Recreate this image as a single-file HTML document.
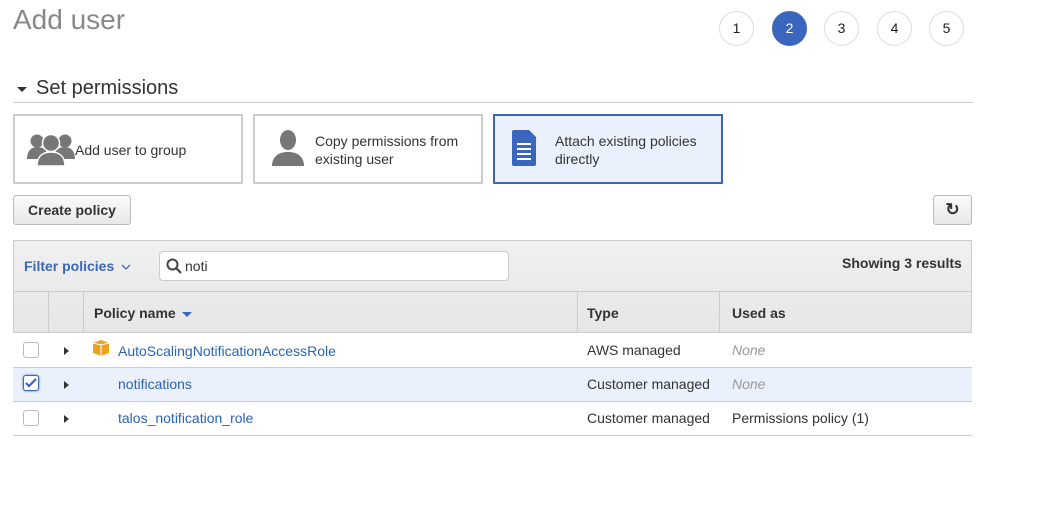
<!DOCTYPE html>
<html><head><style>
*{margin:0;padding:0;box-sizing:border-box}
body{width:1054px;height:527px;background:#fff;font-family:"Liberation Sans",Arial,sans-serif;color:#333;position:relative;overflow:hidden;font-size:14px}
.a{position:absolute}
.step{position:absolute;top:11px;width:35px;height:35px;border-radius:50%;border:1px solid #ddd;text-align:center;line-height:33px;font-size:14px;color:#222}
.card{position:absolute;top:114px;width:230px;height:70px;border:2px solid #ccc;background:#fff}
.card span{position:absolute;font-size:14px;line-height:18px;color:#333}
.hdr{background:linear-gradient(#f0f0f0,#e6e6e6)}
.cell{position:absolute;font-size:14px}
.cb{position:absolute;left:23px;width:16px;height:16px;border:1px solid #bbb;border-radius:3px;background:#fff}
.tri{position:absolute;left:64px;width:0;height:0;border-left:5px solid #333;border-top:4px solid transparent;border-bottom:4px solid transparent}
.link{color:#2a62b8}
</style></head><body>
<div class="a" style="left:13px;top:4px;font-size:28px;color:#888">Add user</div>
<div class="step" style="left:719px">1</div>
<div class="step" style="left:772px;background:#3b66bd;border-color:#3b66bd;color:#fff">2</div>
<div class="step" style="left:824px">3</div>
<div class="step" style="left:877px">4</div>
<div class="step" style="left:929px">5</div>

<div class="a" style="left:17px;top:87px;width:0;height:0;border-top:5px solid #333;border-left:5px solid transparent;border-right:5px solid transparent"></div>
<div class="a" style="left:36px;top:77px;font-size:20px;color:#333">Set permissions</div>
<div class="a" style="left:13px;top:102px;width:960px;height:1px;background:#ccc"></div>

<div class="card" style="left:13px">
<svg class="a" style="left:12px;top:16px" width="48" height="34" viewBox="0 0 48 34" fill="#777"><circle cx="10" cy="9" r="6.5"/><circle cx="38" cy="9" r="6.5"/><path d="M0 27c0-8 4-12 10-12s9 3 10 6v6z"/><path d="M48 27c0-8-4-12-10-12s-9 3-10 6v6z"/><circle cx="24" cy="11" r="8.5" stroke="#fff" stroke-width="1.5"/><path d="M10 34c0-10 6-14 14-14s14 4 14 14z" stroke="#fff" stroke-width="1.5"/></svg>
<span style="left:60px;top:25px">Add user to group</span></div>
<div class="card" style="left:253px">
<svg class="a" style="left:17px;top:14px" width="32" height="36" viewBox="0 0 32 36" fill="#777"><ellipse cx="16" cy="10" rx="8" ry="10"/><path d="M0 36c0-9 6-14 16-14s16 5 16 14z"/></svg>
<span style="left:60px;top:16px">Copy permissions from<br>existing user</span></div>
<div class="card" style="left:493px;border-color:#3b66bd;background:#eaf1fd">
<svg class="a" style="left:17px;top:14px" width="24" height="36" viewBox="0 0 24 36"><path d="M2 0h15l7 7v27a2 2 0 0 1-2 2H2a2 2 0 0 1-2-2V2a2 2 0 0 1 2-2z" fill="#3b66bd"/><g stroke="#fff" stroke-width="2"><path d="M5 14h14M5 19h14M5 24h14M5 29h14"/></g></svg>
<span style="left:60px;top:16px">Attach existing policies<br>directly</span></div>

<div class="a" style="left:13px;top:195px;width:118px;height:30px;border:1px solid #bbb;border-radius:3px;background:linear-gradient(#fafafa,#e8e8e8);font-weight:bold;font-size:14px;text-align:center;line-height:28px;color:#333">Create policy</div>
<div class="a" style="left:933px;top:195px;width:39px;height:30px;border:1px solid #bbb;border-radius:3px;background:linear-gradient(#fafafa,#e8e8e8);text-align:center;line-height:28px;font-size:17px;font-weight:bold;color:#333">&#x21bb;</div>

<div class="a hdr" style="left:13px;top:240px;width:959px;height:93px;border:1px solid #ccc"></div>
<div class="a" style="left:13px;top:291px;width:959px;height:1px;background:#ccc"></div>
<div class="a" style="left:48px;top:292px;width:1px;height:41px;background:#ccc"></div>
<div class="a" style="left:83px;top:292px;width:1px;height:41px;background:#ccc"></div>
<div class="a" style="left:577px;top:292px;width:1px;height:41px;background:#ccc"></div>
<div class="a" style="left:719px;top:292px;width:1px;height:41px;background:#ccc"></div>
<div class="a" style="left:24px;top:258px;font-weight:bold;color:#3b66bd">Filter policies</div>
<svg class="a" style="left:121px;top:264px" width="10" height="6" viewBox="0 0 10 6"><path d="M1 1l4 4 4-4" fill="none" stroke="#3b66bd" stroke-width="1.3"/></svg>
<div class="a" style="left:159px;top:251px;width:350px;height:30px;background:#fff;border:1px solid #ccc;border-radius:4px"></div>
<svg class="a" style="left:166px;top:258px" width="16" height="16" viewBox="0 0 16 16"><circle cx="6.5" cy="6.5" r="5" fill="none" stroke="#444" stroke-width="2"/><path d="M10 10l5 5" stroke="#444" stroke-width="2.2"/></svg>
<div class="a" style="left:185px;top:258px;color:#333">noti</div>
<div class="a" style="left:842px;top:255px;font-weight:bold;color:#333">Showing 3 results</div>
<div class="a" style="left:94px;top:305px;font-weight:bold">Policy name</div>
<div class="a" style="left:182px;top:312px;border-top:5px solid #3b66bd;border-left:5px solid transparent;border-right:5px solid transparent"></div>
<div class="a" style="left:587px;top:305px;font-weight:bold">Type</div>
<div class="a" style="left:732px;top:305px;font-weight:bold">Used as</div>

<div class="a" style="left:13px;top:367px;width:959px;height:34px;background:#eaf1fd"></div>
<div class="a" style="left:13px;top:367px;width:959px;height:1px;background:#ccc"></div>
<div class="a" style="left:13px;top:401px;width:959px;height:1px;background:#ccc"></div>
<div class="a" style="left:13px;top:435px;width:959px;height:1px;background:#ccc"></div>

<div class="cb" style="top:342px"></div>
<div class="cb" style="top:375px;border-color:#3b66bd;box-shadow:0 0 2px #3b66bd"><svg width="14" height="14" viewBox="0 0 14 14" style="position:absolute;left:0;top:0"><path d="M2 7l3 3 7-7" fill="none" stroke="#3b66bd" stroke-width="2.2"/></svg></div>
<div class="cb" style="top:410px"></div>
<div class="tri" style="top:347px"></div>
<div class="tri" style="top:381px"></div>
<div class="tri" style="top:415px"></div>
<svg class="a" style="left:93px;top:340px" width="16" height="16" viewBox="0 0 16 16"><path d="M0 3l8-3 8 3v10l-8 3-8-3z" fill="#e8a323"/><path d="M8 5v11M0 3l8 2 8-2" stroke="#fff" stroke-width="1" fill="none"/></svg>
<div class="cell link" style="left:118px;top:343px">AutoScalingNotificationAccessRole</div>
<div class="cell link" style="left:118px;top:376px">notifications</div>
<div class="cell link" style="left:118px;top:410px">talos_notification_role</div>
<div class="cell" style="left:587px;top:342px">AWS managed</div>
<div class="cell" style="left:587px;top:376px">Customer managed</div>
<div class="cell" style="left:587px;top:410px">Customer managed</div>
<div class="cell" style="left:732px;top:342px;color:#999;font-style:italic">None</div>
<div class="cell" style="left:732px;top:376px;color:#999;font-style:italic">None</div>
<div class="cell" style="left:732px;top:410px">Permissions policy (1)</div>
</body></html>
